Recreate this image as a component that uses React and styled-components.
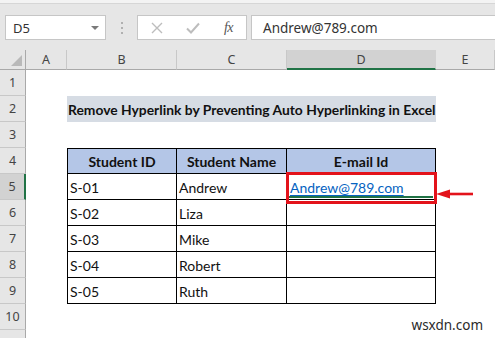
import styled, { createGlobalStyle } from "styled-components";

const GlobalStyle = createGlobalStyle`
  html, body {
    margin: 0;
    padding: 0;
    background: #ffffff;
    overflow: hidden;
  }
`;

const Frame = styled.div`
  width: 495px;
  height: 338px;
  position: relative;
  overflow: hidden;
  background: #ffffff;
  display: flex;
  flex-direction: column;
`;

const TopStrip = styled.div`
  height: 3px;
  flex-shrink: 0;
  background: #f3f3f3;
  border-bottom: 1px solid #d6d6d6;
`;

const FormulaBar = styled.div`
  flex-shrink: 0;
  height: 46px;
  box-sizing: border-box;
  background: #e6e6e6;
  padding: 11px 0 10px 5px;
  display: flex;
  align-items: stretch;
`;

const Box = styled.div`
  background: #ffffff;
  border: 1px solid #c6c6c6;
  box-sizing: border-box;
  display: flex;
  align-items: center;
`;

const NameBox = styled(Box)`
  width: 101px;
  padding: 0 6px 0 7px;
  justify-content: space-between;
  font-family: "Noto Sans", "Open Sans", sans-serif;
  font-size: 13px;
  color: #333333;
`;

const DropArrow = styled.span`
  width: 0;
  height: 0;
  border-left: 4px solid transparent;
  border-right: 4px solid transparent;
  border-top: 4px solid #7a7a7a;
`;

const Dots = styled.div`
  width: 31px;
  display: flex;
  flex-direction: column;
  align-items: center;
  justify-content: center;
  gap: 3px;

  span {
    width: 2px;
    height: 2px;
    background: #b0b0b0;
  }
`;

const IconBox = styled(Box)`
  width: 110px;
  padding: 0 13px 0 13px;
  justify-content: space-between;
`;

const Fx = styled.span`
  font-family: "Liberation Serif", serif;
  font-style: italic;
  font-size: 14px;
  color: #555555;
  letter-spacing: -0.5px;
`;

const FormulaInput = styled(Box)`
  flex: 1;
  margin-left: 4px;
  border-right: none;
  padding-left: 11px;
  font-family: "Noto Sans", "Open Sans", sans-serif;
  font-size: 13.5px;
  color: #333333;
`;

const Sheet = styled.div`
  flex: 1;
  display: grid;
  grid-template-columns: 26px 41px 110px 110px 149px 1fr;
  grid-template-rows: 20px repeat(11, 26px);
`;

const Corner = styled.div`
  background: #e6e6e6;
  border-right: 1px solid #a9a9a9;
  border-bottom: 1px solid #a9a9a9;
  display: flex;
  align-items: flex-end;
  justify-content: flex-end;
  padding: 0 3px 3px 0;
`;

const ColHeader = styled.div`
  background: ${(p) => (p.$active ? "#d2d2d2" : "#e6e6e6")};
  border-right: 1px solid ${(p) => (p.$active ? "#d2d2d2" : "#c8c8c8")};
  border-bottom: ${(p) => (p.$active ? "2px solid #217346" : "1px solid #a9a9a9")};
  font-family: "Noto Sans", "Open Sans", sans-serif;
  font-size: 12.5px;
  color: #444444;
  display: flex;
  align-items: center;
  justify-content: center;
  padding-bottom: ${(p) => (p.$active ? "0" : "1px")};
`;

const RowHeader = styled.div`
  background: ${(p) => (p.$active ? "#d2d2d2" : "#e6e6e6")};
  border-right: ${(p) => (p.$active ? "2px solid #217346" : "1px solid #a9a9a9")};
  border-bottom: 1px solid #c8c8c8;
  font-family: "Noto Sans", "Open Sans", sans-serif;
  font-size: 12.5px;
  color: #444444;
  display: flex;
  align-items: center;
  justify-content: center;
`;

const Blank = styled.div``;

const TitleCell = styled.div`
  grid-column: span 3;
  background: #d6dce4;
  font-family: Lato, "Liberation Sans", sans-serif;
  font-weight: 700;
  font-size: 13.85px;
  color: #111111;
  display: flex;
  align-items: center;
  padding: 1px 0 0 1px;
  white-space: nowrap;
  overflow: hidden;
`;

const Cell = styled.div`
  box-sizing: border-box;
  position: relative;
  border-right: 1px solid #000000;
  border-bottom: 1px solid #000000;
  border-left: ${(p) => (p.$first ? "1px solid #000000" : "none")};
  border-top: ${(p) => (p.$head ? "1px solid #000000" : "none")};
  background: ${(p) => (p.$head ? "#b4c6e7" : "#ffffff")};
  font-family: Lato, "Liberation Sans", sans-serif;
  font-size: 14px;
  font-weight: ${(p) => (p.$head ? 700 : 400)};
  color: #111111;
  display: flex;
  align-items: flex-end;
  justify-content: ${(p) => (p.$head ? "center" : "flex-start")};
  padding: 0 2px 3px 2px;
  line-height: 17px;
  white-space: nowrap;
`;

const SelectedCell = styled(Cell)`
  &::before {
    content: "";
    position: absolute;
    left: 1px;
    right: 2px;
    bottom: 1px;
    height: 2px;
    background: #217346;
  }
  &::after {
    content: "";
    position: absolute;
    top: -2px;
    left: -1px;
    right: -2px;
    bottom: -5px;
    border: 3px solid #e3131b;
    z-index: 2;
  }
`;

const Link = styled.span`
  color: #0563c1;
  text-decoration: underline;
  text-underline-offset: 2px;
  padding-left: 1px;
`;

const Arrow = styled.svg`
  position: absolute;
  left: 148px;
  top: 14px;
  z-index: 3;
`;

const Watermark = styled.div`
  position: absolute;
  right: 12px;
  bottom: 4px;
  font-family: "Noto Sans", "Open Sans", sans-serif;
  font-size: 13.5px;
  color: #2a2a2a;
`;

const columns = ["A", "B", "C", "D", "E"];

const students = [
  { id: "S-01", name: "Andrew", email: "Andrew@789.com" },
  { id: "S-02", name: "Liza" },
  { id: "S-03", name: "Mike" },
  { id: "S-04", name: "Robert" },
  { id: "S-05", name: "Ruth" },
];

const SpacerRow = ({ n }) => (
  <>
    <RowHeader>{n}</RowHeader>
    <Blank />
    <Blank />
    <Blank />
    <Blank />
    <Blank />
  </>
);

export default function App() {
  return (
    <Frame>
      <GlobalStyle />
      <TopStrip />
      <FormulaBar>
        <NameBox>
          D5
          <DropArrow />
        </NameBox>
        <Dots>
          <span />
          <span />
          <span />
        </Dots>
        <IconBox>
          <svg width="12" height="12" viewBox="0 0 12 12">
            <path d="M1 1L11 11M11 1L1 11" stroke="#bdbdbd" strokeWidth="1.4" />
          </svg>
          <svg width="14" height="12" viewBox="0 0 14 12">
            <path d="M1 6.5L5 10.5L13 1.5" stroke="#bdbdbd" strokeWidth="2" fill="none" />
          </svg>
          <Fx>fx</Fx>
        </IconBox>
        <FormulaInput>Andrew@789.com</FormulaInput>
      </FormulaBar>

      <Sheet>
        <Corner>
          <svg width="11" height="11" viewBox="0 0 11 11">
            <path d="M11 0L11 11L0 11Z" fill="#b9b9b9" />
          </svg>
        </Corner>
        {columns.map((c) => (
          <ColHeader key={c} $active={c === "D"}>
            {c}
          </ColHeader>
        ))}

        <SpacerRow n={1} />

        <RowHeader>2</RowHeader>
        <Blank />
        <TitleCell>Remove Hyperlink by Preventing Auto Hyperlinking in Excel</TitleCell>
        <Blank />

        <SpacerRow n={3} />

        <RowHeader>4</RowHeader>
        <Blank />
        <Cell $head $first>Student ID</Cell>
        <Cell $head>Student Name</Cell>
        <Cell $head>E-mail Id</Cell>
        <Blank />

        {students.map((s, i) => (
          <>
            <RowHeader key={"h" + s.id} $active={i === 0}>
              {i + 5}
            </RowHeader>
            <Blank key={"a" + s.id} />
            <Cell key={"b" + s.id} $first>
              {s.id}
            </Cell>
            <Cell key={"c" + s.id}>{s.name}</Cell>
            {s.email ? (
              <SelectedCell key={"d" + s.id}>
                <Link>{s.email}</Link>
                <Arrow width="40" height="12" viewBox="0 0 40 12">
                  <path d="M14 6H38" stroke="#e3131b" strokeWidth="2.6" />
                  <path d="M1 6L15 1.5V10.5Z" fill="#e3131b" />
                </Arrow>
              </SelectedCell>
            ) : (
              <Cell key={"d" + s.id} />
            )}
            <Blank key={"e" + s.id} />
          </>
        ))}

        <SpacerRow n={10} />
        <SpacerRow n="" />
      </Sheet>
      <Watermark>wsxdn.com</Watermark>
    </Frame>
  );
}
